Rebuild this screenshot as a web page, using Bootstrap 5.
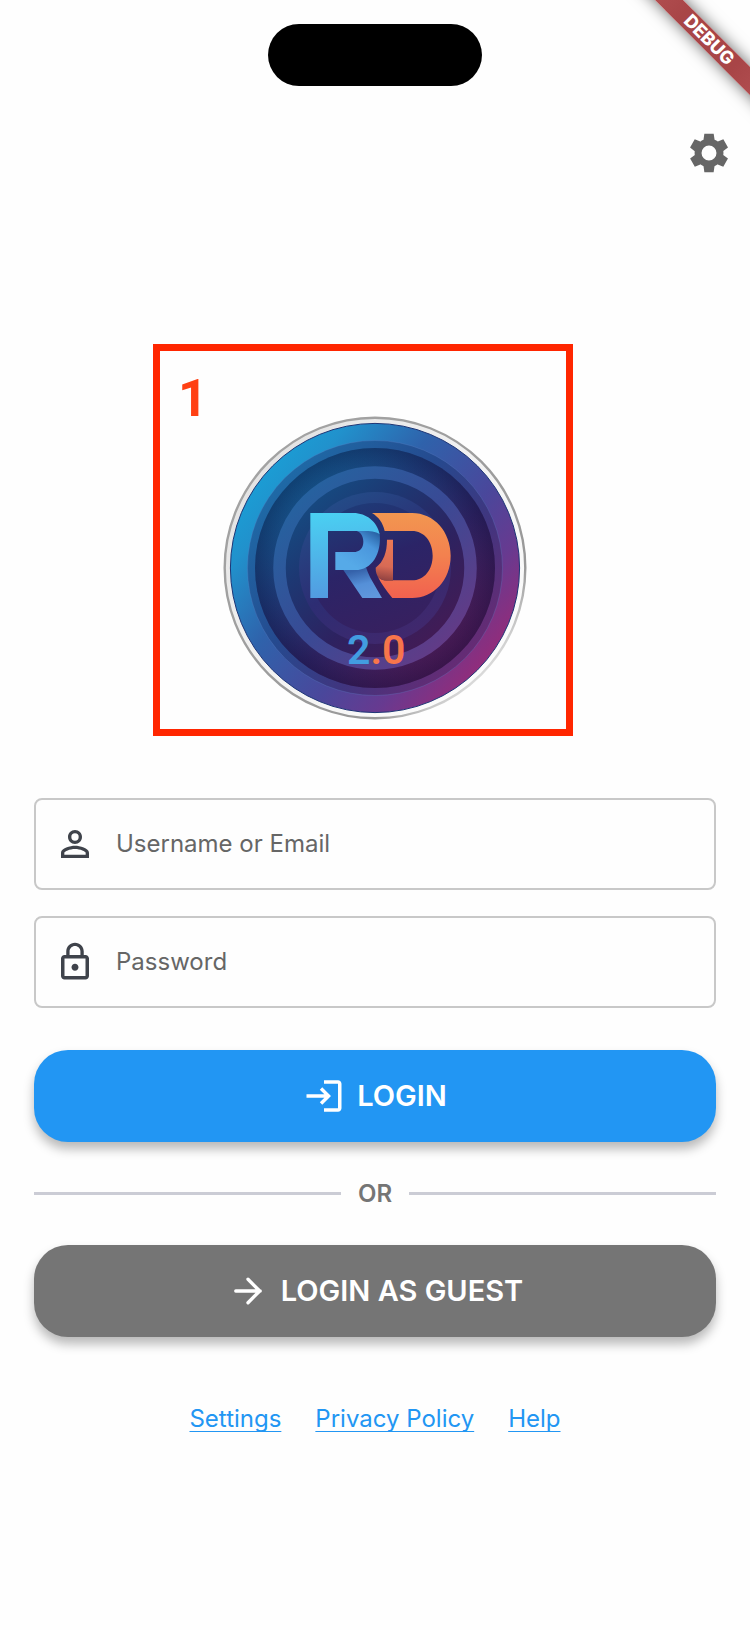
<!DOCTYPE html>
<html lang="en">
<head>
<meta charset="utf-8">
<meta name="viewport" content="width=device-width, initial-scale=1">
<title>Login</title>
<link href="https://cdn.jsdelivr.net/npm/bootstrap@5.3.0/dist/css/bootstrap.min.css" rel="stylesheet">
<style>
  body { font-family: Inter, Roboto, "Liberation Sans", sans-serif; background: #fefefe; }
  .screen { padding: 24px 34px 40px; }
  .island { width: 214px; height: 62px; background: #000; border-radius: 31px; }
  .ribbon-clip { top: 0; right: 0; width: 140px; height: 140px; pointer-events: none; }
  .ribbon { width: 240px; height: 20px; left: -21px; top: 30px; transform: rotate(45deg);
    background: linear-gradient(90deg, #bd5a5c, #a84547 35%, #a84547 65%, #bd5a5c);
    box-shadow: 0 0 16px rgba(0,0,0,.6); color: #fff; font-size: 18px; line-height: 20px; font-weight: 800; }
  .gear-row { margin: 44px -16px 0 0; }
  .icon-btn { width: 46px; height: 46px; color: #666; }
  .emblem { width: 304px; margin: 240px auto 78px; }
  .callout { left: -70px; top: -72px; width: 420px; height: 392px; border: 7px solid #ff2600; pointer-events: none; }
  .callout-num { left: 18px; top: 18px; font: bold 52px/60px Roboto, sans-serif; color: #ff4013; }
  .ver { font: 600 41px Roboto, sans-serif; }
  .field { height: 92px; border: 2px solid #c8c8c8; border-radius: 8px; padding: 0 20px 0 18px; gap: 20px; color: #3f434b; margin-bottom: 26px; }
  .field .form-control { height: 88px; color: #333; }
  .field .form-control, .field label { font-size: 24px; }
  .field label { color: #666; pointer-events: none; }
  .field .form-control:not(:placeholder-shown) + label { visibility: hidden; }
  .ico { width: 42px; height: 42px; flex: none; fill: currentColor; }
  .action { height: 92px; border: 0; border-radius: 34px; gap: 12px; font-size: 29px; font-weight: 600; color: #fff;
    box-shadow: 0 7px 11px rgba(0,0,0,.28); }
  .action:hover { color: #fff; }
  .action-login, .action-login:hover { background: #2296f3; margin-top: 42px; }
  .action-guest, .action-guest:hover { background: #757575; }
  .divider { gap: 17px; height: 103px; font-size: 24px; font-weight: 600; color: #757575; }
  .rule { height: 3px; background: #cbccd5; }
  .links { gap: 34px; margin-top: 67px; font-size: 24px; line-height: 30px; }
  .links a { color: #2296f3; text-decoration-thickness: 1px; text-underline-offset: 4px; text-decoration-skip-ink: none; }
</style>
</head>
<body>
<div class="ribbon-clip position-absolute overflow-hidden"><div class="ribbon position-absolute text-center">DEBUG</div></div>
<main class="screen">
  <div class="island mx-auto"></div>
  <div class="gear-row d-flex justify-content-end">
    <button type="button" class="icon-btn btn p-0 border-0 d-flex" aria-label="Open settings">
      <svg width="46" height="46" viewBox="0 0 24 24" fill="currentColor"><path d="M19.44 12.99l.01-.02c.04-.32.08-.64.08-.98 0-.34-.03-.66-.07-.99l.01.02 2.44-1.92-2.43-4.22-2.87 1.16.01.01c-.52-.4-1.09-.74-1.71-1h.01L14.44 2H9.57l-.44 3.07h.01c-.62.26-1.19.6-1.71 1l.01-.01-2.88-1.17-2.44 4.22 2.44 1.92.01-.02c-.04.33-.07.65-.07.99 0 .34.03.66.08.98l.01.02-2.1 1.65-.33.26 2.43 4.2 2.88-1.15-.02-.04c.53.41 1.1.75 1.73 1.01h-.03L9.58 22h4.85s.03-.18.06-.42l.38-2.65h-.01c.62-.26 1.2-.6 1.73-1.01l-.02.04 2.88 1.15 2.43-4.2s-.14-.12-.33-.26zM12 15.9a3.9 3.9 0 1 1 0-7.8 3.9 3.9 0 0 1 0 7.8z"/></svg>
    </button>
  </div>

  <div class="emblem position-relative">
    <svg class="d-block" width="304" height="304" viewBox="0 0 304 304" role="img" aria-label="RD 2.0">
      <defs>
        <linearGradient id="rim" x1=".08" y1=".24" x2=".86" y2=".88"><stop offset="0" stop-color="#1c9bd3"/><stop offset=".1" stop-color="#2191cc"/><stop offset=".34" stop-color="#2f62ab"/><stop offset=".62" stop-color="#4a479b"/><stop offset=".8" stop-color="#673a90"/><stop offset="1" stop-color="#962b79"/></linearGradient>
        <linearGradient id="bevel" x1=".1" y1=".15" x2=".9" y2=".85"><stop offset="0" stop-color="#1e6ca8"/><stop offset=".4" stop-color="#254a8f"/><stop offset=".7" stop-color="#40357f"/><stop offset="1" stop-color="#6a2a73"/></linearGradient>
        <linearGradient id="dish" x1=".15" y1=".1" x2=".85" y2=".9"><stop offset="0" stop-color="#11578a"/><stop offset=".32" stop-color="#1d3873"/><stop offset=".6" stop-color="#2d2260"/><stop offset="1" stop-color="#4d1850"/></linearGradient>
        <linearGradient id="halo" x1=".1" y1=".1" x2=".9" y2=".9"><stop offset="0" stop-color="#2563a0"/><stop offset=".5" stop-color="#394a95"/><stop offset="1" stop-color="#643a86"/></linearGradient>
        <linearGradient id="halo2" x1=".2" y1="0" x2=".8" y2="1"><stop offset="0" stop-color="#224f8a"/><stop offset=".5" stop-color="#2d2d73"/><stop offset="1" stop-color="#44276c"/></linearGradient>
        <linearGradient id="core" x1=".3" y1="0" x2=".7" y2="1"><stop offset="0" stop-color="#1e3b78"/><stop offset=".45" stop-color="#2b2467"/><stop offset="1" stop-color="#38205f"/></linearGradient>
        <radialGradient id="edge"><stop offset=".84" stop-color="#0b0b3a" stop-opacity="0"/><stop offset="1" stop-color="#0b0b3a" stop-opacity=".28"/></radialGradient>
        <linearGradient id="sky" gradientUnits="userSpaceOnUse" x1="100" y1="66" x2="130" y2="321"><stop offset="0" stop-color="#4ad0f2"/><stop offset="1" stop-color="#529ae0"/></linearGradient>
        <linearGradient id="bowl" gradientUnits="userSpaceOnUse" x1="262" y1="118" x2="190" y2="225"><stop offset="0" stop-color="#23599b"/><stop offset=".4" stop-color="#4a96dc"/><stop offset="1" stop-color="#56aae8"/></linearGradient>
        <linearGradient id="leg" gradientUnits="userSpaceOnUse" x1="215" y1="235" x2="235" y2="321"><stop offset="0" stop-color="#3562aa"/><stop offset=".5" stop-color="#5590d8"/><stop offset="1" stop-color="#6097dc"/></linearGradient>
        <linearGradient id="sun" gradientUnits="userSpaceOnUse" x1="0" y1="66" x2="0" y2="321"><stop offset="0" stop-color="#f29650"/><stop offset=".5" stop-color="#f3814f"/><stop offset="1" stop-color="#f1614f"/></linearGradient>
        <linearGradient id="tail" gradientUnits="userSpaceOnUse" x1="302" y1="146" x2="284" y2="270"><stop offset="0" stop-color="#ed7a55"/><stop offset=".65" stop-color="#d86a55"/><stop offset="1" stop-color="#8e4040"/></linearGradient>
        <linearGradient id="metal" x1="0" y1="0" x2="1" y2="1"><stop offset="0" stop-color="#a5a5a5"/><stop offset=".75" stop-color="#999"/><stop offset=".86" stop-color="#ddd"/><stop offset="1" stop-color="#999"/></linearGradient>
        <linearGradient id="plate" x1="0" y1="0" x2="1" y2="1"><stop offset="0" stop-color="#dcdcdc"/><stop offset=".4" stop-color="#f0f0f0"/><stop offset="1" stop-color="#fff"/></linearGradient>
      </defs>
      <circle cx="152" cy="152" r="150.3" fill="url(#plate)" stroke="url(#metal)" stroke-width="2.4"/>
      <circle cx="152" cy="152" r="144.6" fill="url(#rim)" stroke="#1d3576" stroke-width="1"/>
      <circle cx="152" cy="152" r="127.5" fill="url(#bevel)" stroke="#5c7fc4" stroke-opacity=".3"/>
      <circle cx="152" cy="152" r="120" fill="url(#dish)"/>
      <circle cx="152" cy="152" r="120" fill="url(#edge)"/>
      <circle cx="152" cy="152" r="95.5" fill="none" stroke="url(#halo)" stroke-width="12.5"/>
      <circle cx="152" cy="152" r="76" fill="url(#halo2)"/>
      <circle cx="152" cy="152" r="65" fill="url(#core)"/>
      <g transform="translate(67 75) scale(.33333)">
        <path fill="url(#leg)" d="M158 234H196Q214 234 228 229Q233 245 241 260L276 321H217Z"/>
        <path fill="url(#bowl)" d="M200 118H250L269 128C275 188 246 237 196 237H136V183H190C210 183 220 170 220 152C220 135 211 123 200 120Z"/>
        <path fill="url(#sky)" d="M61 66H190C229 66 262 92 269 130C257 121 240 120 220 120H114V321H61Z"/>
        <path fill="url(#sun)" d="M246 66H366C432 66 482 122 482 194C482 266 432 321 366 321H307C290 300 274 278 262 254C268 265 280 268 294 268H366C403 268 428 236 428 194C428 152 403 120 366 120H284C279 96 266 78 246 66Z"/>
        <path fill="url(#tail)" d="M291 146H309V269H290C270 268 257 257 257 230C281 212 291 184 291 146Z"/>
      </g>
      <text class="ver" x="124" y="248" fill="#429de0">2<tspan fill="#f7754b">.0</tspan></text>
    </svg>
    <div class="callout position-absolute"><span class="callout-num position-absolute">1</span></div>
  </div>

  <form onsubmit="return false">
    <div class="field d-flex align-items-center">
      <svg class="ico" viewBox="0 0 24 24"><path d="M12 5.900a2.100 2.100 0 1 1 0 4.200 2.100 2.100 0 0 1 0-4.200m0 9c2.970 0 6.100 1.460 6.100 2.100v1.100H5.900V17c0-.64 3.130-2.100 6.100-2.100M12 4C9.790 4 8 5.790 8 8s1.790 4 4 4 4-1.790 4-4-1.790-4-4-4m0 9c-2.670 0-8 1.340-8 4v3h16v-3c0-2.660-5.330-4-8-4"/></svg>
      <div class="position-relative flex-fill">
        <input id="user" type="text" class="form-control border-0 bg-transparent shadow-none p-0" placeholder=" ">
        <label for="user" class="position-absolute top-0 start-0 h-100 d-flex align-items-center">Username or Email</label>
      </div>
    </div>
    <div class="field d-flex align-items-center">
      <svg class="ico" viewBox="0 0 24 24"><path d="M18 8h-1V6c0-2.760-2.240-5-5-5S7 3.240 7 6v2H6c-1.100 0-2 .9-2 2v10c0 1.100.9 2 2 2h12c1.100 0 2-.9 2-2V10c0-1.100-.9-2-2-2M8.900 6c0-1.710 1.390-3.100 3.100-3.100s3.100 1.390 3.100 3.100v2H8.900zM18 20H6V10h12zm-6-3c1.100 0 2-.9 2-2s-.9-2-2-2-2 .9-2 2 .9 2 2 2"/></svg>
      <div class="position-relative flex-fill">
        <input id="pass" type="password" class="form-control border-0 bg-transparent shadow-none p-0" placeholder=" ">
        <label for="pass" class="position-absolute top-0 start-0 h-100 d-flex align-items-center">Password</label>
      </div>
    </div>
    <button type="submit" class="action action-login btn w-100 d-flex align-items-center justify-content-center">
      <svg class="ico" viewBox="0 0 24 24"><path d="M11 7 9.600 8.400l2.600 2.600H2v2h10.200l-2.600 2.600L11 17l5-5zm9 12h-8v2h8c1.100 0 2-.9 2-2V5c0-1.100-.9-2-2-2h-8v2h8z"/></svg>
      LOGIN
    </button>
    <div class="divider d-flex align-items-center">
      <span class="rule flex-fill"></span><span>OR</span><span class="rule flex-fill"></span>
    </div>
    <button type="button" class="action action-guest btn w-100 d-flex align-items-center justify-content-center">
      <svg class="ico" viewBox="0 0 24 24"><path fill="none" stroke="currentColor" stroke-width="1.900" stroke-linecap="round" stroke-linejoin="round" d="M5 12H19M12 5.300 18.700 12 12 18.700"/></svg>
      LOGIN AS GUEST
    </button>
  </form>
  <nav class="links d-flex justify-content-center" aria-label="More">
    <a href="#">Settings</a><a href="#">Privacy Policy</a><a href="#">Help</a>
  </nav>
</main>
<script src="https://cdn.jsdelivr.net/npm/bootstrap@5.3.0/dist/js/bootstrap.bundle.min.js"></script>
</body>
</html>
